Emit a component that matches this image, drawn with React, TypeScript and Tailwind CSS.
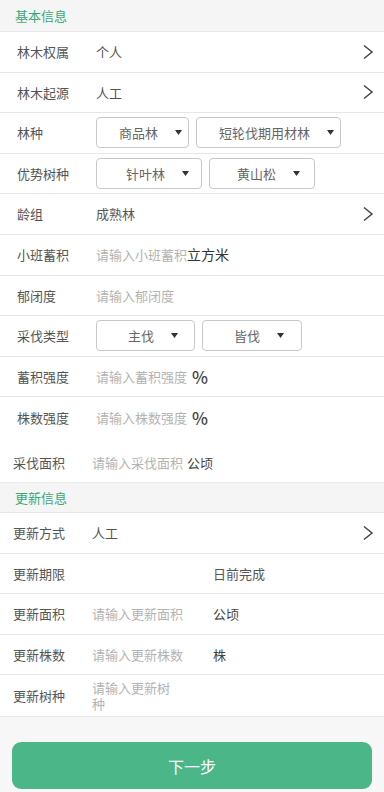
import React from "react";

const font = { fontFamily: '"Noto Sans CJK SC", "Noto Sans", sans-serif' };

function Chevron() {
  return (
    <svg width="12" height="16" viewBox="0 0 12 16" className="absolute right-[10px] top-1/2 -translate-y-1/2">
      <path d="M2 1.5 L10 8 L2 14.5" fill="none" stroke="#444" strokeWidth="1.5" strokeLinejoin="miter" />
    </svg>
  );
}

function Tri() {
  return (
    <svg width="7" height="5" viewBox="0 0 7 5">
      <path d="M0 0 L7 0 L3.5 5 Z" fill="#333" />
    </svg>
  );
}

function Select({ text, w, pr }: { text: string; w: string; pr: string }) {
  return (
    <div className={`h-[31px] ${w} ${pr} border border-[#c8c8c8] rounded-[4px] flex items-center justify-end gap-[17px] text-[13px] text-[#666] shrink-0`}>
      <span>{text}</span>
      <Tri />
    </div>
  );
}

function Row({
  label,
  children,
  border = true,
  chevron = false,
  h = "h-[40.6px]",
  lx = "pl-[17px]",
  lw = "w-[79px]",
  extra = "",
}: {
  label: string;
  children?: React.ReactNode;
  border?: boolean;
  chevron?: boolean;
  h?: string;
  lx?: string;
  lw?: string;
  extra?: string;
}) {
  return (
    <div className={`relative flex items-center shrink-0 ${h} ${lx} ${extra} ${border ? "border-b border-[#e6e6e6]" : ""}`}>
      <div className={`${lw} shrink-0 text-[13px] text-[#555]`}>{label}</div>
      <div className="flex items-center flex-1 min-w-0">{children}</div>
      {chevron && <Chevron />}
    </div>
  );
}

function Section({ title, h, top = "" }: { title: string; h: string; top?: string }) {
  return (
    <div className={`${h} ${top} shrink-0 bg-[#f5f5f5] border-b border-[#e6e6e6] flex items-center pl-[15px] text-[13px] text-[#3aa877]`}>
      {title}
    </div>
  );
}

const ph = "text-[13px] text-[#b3b3b3]";

export default function App() {
  return (
    <div style={font} className="w-[384px] h-[792px] bg-white flex flex-col overflow-hidden">
      <Section title="基本信息" h="h-[32px]" />
      <Row label="林木权属" chevron>
        <span className="text-[13px] text-[#555]">个人</span>
      </Row>
      <Row label="林木起源" chevron>
        <span className="text-[13px] text-[#555]">人工</span>
      </Row>
      <Row label="林种">
        <div className="flex gap-[7px]">
          <Select text="商品林" w="w-[93px]" pr="pr-[6px]" />
          <Select text="短轮伐期用材林" w="w-[145px]" pr="pr-[6px]" />
        </div>
      </Row>
      <Row label="优势树种">
        <div className="flex gap-[7px]">
          <Select text="针叶林" w="w-[106px]" pr="pr-[12px]" />
          <Select text="黄山松" w="w-[106px]" pr="pr-[14px]" />
        </div>
      </Row>
      <Row label="龄组" chevron>
        <span className="text-[13px] text-[#555]">成熟林</span>
      </Row>
      <Row label="小班蓄积">
        <span className={ph}>请输入小班蓄积</span>
        <span className="text-[14px] text-[#333]">立方米</span>
      </Row>
      <Row label="郁闭度">
        <span className={ph}>请输入郁闭度</span>
      </Row>
      <Row label="采伐类型">
        <div className="flex gap-[7px]">
          <Select text="主伐" w="w-[99px]" pr="pr-[16px]" />
          <Select text="皆伐" w="w-[100px]" pr="pr-[17px]" />
        </div>
      </Row>
      <Row label="蓄积强度">
        <span className={ph}>请输入蓄积强度</span>
        <span className="ml-[5px] text-[17px] font-medium text-[#444] leading-none">%</span>
      </Row>
      <Row label="株数强度" border={false}>
        <span className={ph}>请输入株数强度</span>
        <span className="ml-[5px] text-[17px] font-medium text-[#444] leading-none">%</span>
      </Row>
      <Row label="采伐面积" border={false} h="h-[44px]" lx="pl-[13px]" extra="pt-[6px]">
        <span className={ph}>请输入采伐面积</span>
        <span className="ml-[4px] text-[13px] text-[#444]">公顷</span>
      </Row>
      <Section title="更新信息" h="h-[31px]" top="border-t border-t-[#ececec]" />
      <Row label="更新方式" chevron lx="pl-[13px]">
        <span className="text-[13px] text-[#555]">人工</span>
      </Row>
      <Row label="更新期限" lx="pl-[13px]">
        <span className="ml-[121px] text-[13px] text-[#555]">日前完成</span>
      </Row>
      <Row label="更新面积" lx="pl-[13px]">
        <span className={`${ph} w-[121px]`}>请输入更新面积</span>
        <span className="text-[13px] text-[#444]">公顷</span>
      </Row>
      <Row label="更新株数" lx="pl-[13px]">
        <span className={`${ph} w-[121px]`}>请输入更新株数</span>
        <span className="text-[13px] text-[#444]">株</span>
      </Row>
      <Row label="更新树种" lx="pl-[13px]" h="h-[42px]">
        <span className={`${ph} w-[86px] leading-[16px]`}>请输入更新树种</span>
      </Row>
      <div className="flex-1 bg-[#f7f7f7] px-[12px] pt-[25px]">
        <div className="h-[47px] rounded-[9px] bg-[#4bb789] flex items-center justify-center text-[16px] text-white">
          下一步
        </div>
      </div>
    </div>
  );
}
